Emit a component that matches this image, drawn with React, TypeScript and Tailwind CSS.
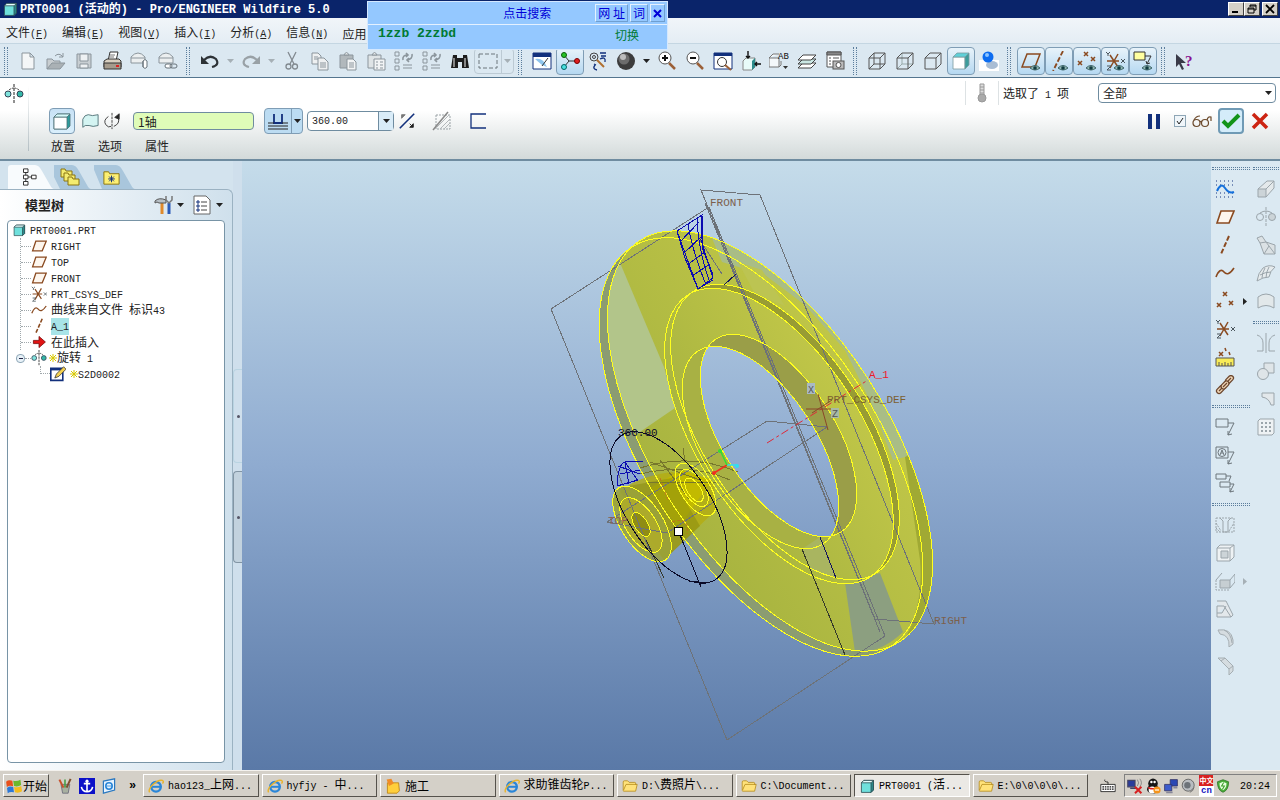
import { ReactNode, SVGProps } from "react";
import clsx from "clsx";

const G = "#8b959c";
const B = "#8a4a20";
const N = "#12307c";
const K = "#4a555c";

const Eye = () => (
  <g>
    <path d="M9 17q5-5 10 0q-5 4-10 0z" fill="#8fb5b0" stroke="#3d6468" />
    <circle cx="14" cy="17" r="1.8" fill="#123c40" />
  </g>
);

const Csys = () => (
  <g>
    <path d="M2 10h12M5 4l8 12M13 3L5 17" stroke={B} strokeWidth="1.5" />
    <path d="M1 1l2 2 2-2M3 3v2M16 8l4 4m0-4l-4 4M2 15h4l-4 4h4" stroke={K} />
  </g>
);

const Ie = () => (
  <g>
    <circle cx="10" cy="11" r="6" stroke="#2a86d8" strokeWidth="3" />
    <path d="M5 11h11" stroke="#2a86d8" strokeWidth="2.5" />
    <path d="M2 18C-1 13 12 1 18 3c2 1 1 3 0 4" stroke="#e8b32c" strokeWidth="1.8" />
  </g>
);

const Folder = () => (
  <path d="M1.500 16V5q0-1.500 1.500-1.500h4l2 2h7q1 0 1 1V8h2l-2 8.500H2z M2 15l3-7h13" fill="#ffe27a" stroke="#b58a1c" />
);

const icons: Record<string, ReactNode> = {
  part: (
    <g stroke="#2b4a50">
      <path d="M3 6l3-3h12v12l-3 3H3z" fill="#6fe0dc" />
      <path d="M15 6l3-3v12l-3 3z" fill="#2c8c8c" />
      <path d="M3 6l3-3h12l-3 3z" fill="#e6ffff" />
    </g>
  ),
  fresh: <path d="M4 2h8l4 4v12H4zM12 2v4h4" fill="#f4f6f7" stroke={G} />,
  open: (
    <g stroke={G}>
      <path d="M1 18V8h5l2 2h6v3" fill="#c8cdd0" />
      <path d="M1 18l5-6h13l-5 6z" fill="#aab1b5" />
      <path d="M9 5q4-4 8 1m0-4v4h-4" />
    </g>
  ),
  save: (
    <g stroke={G}>
      <path d="M3 3h14v14H3z" fill="#c8ced2" />
      <path d="M6 3h8v7H6zM6 13h8v4H6z" fill="#eef1f3" />
    </g>
  ),
  print: (
    <g stroke="#333">
      <path d="M6 10l2-9h8l-2 9z" fill="#fff" />
      <path d="M2 10l3-2h12l2 2v6H2z" fill="#d8cfc0" />
      <path d="M2 12h17v6H2z" fill="#a59b8c" />
      <path d="M8 4h5M7 6h5" stroke="#777" />
      <path d="M14 15h3" stroke="#d22" strokeWidth="2" />
    </g>
  ),
  mail: (
    <g stroke={G}>
      <path d="M1 12V6q7-8 14 0v6z" fill="#eceff0" />
      <path d="M1 7h14" />
      <path d="M13 10v6q2 3 4 0v-6q-2-3-4 0v6" fill="#fff" stroke="#68737a" />
    </g>
  ),
  mailLink: (
    <g stroke={G}>
      <path d="M1 12V6q7-8 14 0v6z" fill="#eceff0" />
      <path d="M1 7h14" />
      <rect x="7" y="13" width="7" height="4" rx="2" fill="#fff" stroke="#68737a" />
      <rect x="12" y="13" width="7" height="4" rx="2" stroke="#68737a" />
    </g>
  ),
  undo: (
    <g>
      <path d="M4 9q6-6 12-1q4 6-4 8" stroke="#2d3236" strokeWidth="2.200" />
      <path d="M1 5v8h8z" fill="#2d3236" />
    </g>
  ),
  redo: (
    <g>
      <path d="M16 9q-6-6-12-1q-4 6 4 8" stroke="#99a1a6" strokeWidth="2.200" />
      <path d="M19 5v8h-8z" fill="#99a1a6" />
    </g>
  ),
  cut: (
    <g stroke="#828a90" strokeWidth="1.300">
      <path d="M6 1l6 12M14 1L8 13" />
      <circle cx="6.500" cy="15.500" r="2.500" />
      <circle cx="13" cy="15.500" r="2.500" />
    </g>
  ),
  copy: (
    <g stroke={G}>
      <path d="M2 2h6l3 3v8H2z" fill="#eef0f1" />
      <path d="M8 7h6l4 4v8H8z" fill="#eef0f1" />
      <path d="M4 6h4M4 8h4M10 12h6M10 14h6M10 16h6" />
    </g>
  ),
  paste: (
    <g stroke={G}>
      <path d="M2 4h13v13H2z" fill="#b1b8bc" />
      <path d="M6 4q2.500-5 5 0z" fill="#e4e7e8" />
      <path d="M9 8h6l3 3v8H9z" fill="#f2f4f5" />
      <path d="M11 12h5M11 14h5M11 16h5" />
    </g>
  ),
  pasteSpecial: (
    <g stroke={G}>
      <path d="M2 4h13v13H2z" fill="#dfe4e6" />
      <path d="M6 4q2.500-5 5 0z" fill="#e4e7e8" />
      <path d="M8 8h11v11H8z" fill="#f2f4f5" />
      <path d="M10 11h2M14 11h3M10 14h2M14 14h3M10 17h2M14 17h3" />
    </g>
  ),
  regen: (
    <g stroke={G}>
      <path d="M1 1h4v4H1zM1 8h4v4H1zM1 15h4v4H1zM9 14h9M9 17h9" />
      <path d="M9 9q-1-5 5-5M18 3q1 5-5 6M12 2l2 2-2 2M15 7l-2 2 2 2" strokeWidth="1.600" />
    </g>
  ),
  find: (
    <g fill="#1c1c1c">
      <path d="M3 4h4v3h6V4h4l2 13h-7v-6H8v6H1z" />
      <path d="M4 7v9M15 7v9" stroke="#aaa" strokeWidth="1.500" />
    </g>
  ),
  box: <path d="M1 3h18v14H1z" stroke="#6d777d" strokeDasharray="4 2" />,
  repaint: (
    <g>
      <path d="M1 2h18v16H1z" fill="#fff" stroke={N} />
      <path d="M1 2h18v4H1z" fill={N} />
      <path d="M3 8q8-2 12 8l-5-2z" fill="#8fc4ec" />
      <path d="M16 7l-6 8" stroke="#333" />
    </g>
  ),
  spin: (
    <g>
      <path d="M4 4l5 6h8M9 10l-5 6" stroke="#333" />
      <circle cx="4" cy="4" r="2.500" fill="#27c427" stroke="#0a5c0a" />
      <circle cx="17" cy="10" r="2.500" fill="#e02020" stroke="#700" />
      <circle cx="4" cy="16" r="2.500" fill="#4ae0e0" stroke="#066" />
    </g>
  ),
  orient: (
    <g stroke={N}>
      <circle cx="6" cy="6" r="4" stroke="#444" />
      <circle cx="6" cy="6" r="1.500" stroke="#444" />
      <path d="M9 9l7 7" stroke="#b07030" strokeWidth="2" />
      <path d="M12 2h6M13 5h5M12 8q6-3 5 3M9 19q-5-1-2-5M6 13l2 1" strokeWidth="1.300" />
    </g>
  ),
  sphere: (
    <g>
      <circle cx="10" cy="10" r="9" fill="#3c3c3c" />
      <circle cx="8" cy="8" r="5.500" fill="#6c6c6c" />
      <circle cx="7" cy="6" r="3" fill="#bdbdbd" />
    </g>
  ),
  zoomIn: (
    <g>
      <circle cx="8" cy="7" r="6" fill="#fff" stroke="#555" />
      <path d="M5 7h6M8 4v6" stroke="#111" strokeWidth="2" />
      <path d="M12 12l6 6" stroke="#9b6038" strokeWidth="2.500" />
    </g>
  ),
  zoomOut: (
    <g>
      <circle cx="8" cy="7" r="6" fill="#fff" stroke="#555" />
      <path d="M5 7h6" stroke="#111" strokeWidth="2" />
      <path d="M12 12l6 6" stroke="#9b6038" strokeWidth="2.500" />
    </g>
  ),
  refit: (
    <g>
      <path d="M1 2h18v16H1z" fill="#fff" stroke={N} />
      <path d="M1 2h18v3H1z" fill={N} />
      <circle cx="9" cy="11" r="4.500" stroke="#333" />
      <path d="M12 14l6 5" stroke="#9b6038" strokeWidth="2" />
    </g>
  ),
  reorient: (
    <g>
      <path d="M2 10l3-3h9v9l-3 3H2z" fill="#e8fbf9" stroke="#888" />
      <path d="M11 10l3-3v9l-3 3z" fill="#2c8c8c" />
      <path d="M7 0v7M5 5l2 2 2-2M20 13h-6M16 11l-2 2 2 2" stroke="#111" strokeWidth="1.400" />
    </g>
  ),
  views: (
    <g>
      <path d="M0 7l4-4h6M0 7h10v9H0zM10 16l2-2v-4" fill="#f4f8fa" stroke="#777" />
      <text x="9" y="8" fontSize="9" fontFamily="Liberation Mono" fill="#111">AB</text>
      <path d="M14 15h5l-2.500 3z" fill="#333" />
    </g>
  ),
  layers: (
    <g fill="#fff" stroke="#444">
      <path d="M1 17l5-5h13l-5 5z" />
      <path d="M1 13l5-5h13l-5 5z" fill="#cbe8e4" />
      <path d="M1 9l5-5h13l-5 5z" />
    </g>
  ),
  viewMgr: (
    <g stroke="#555">
      <path d="M2 1h14v15H2z" fill="#fff" />
      <path d="M2 1h14v3H2z" fill="#888" />
      <path d="M4 7h2M8 7h6M4 10h2M4 13h2" />
      <rect x="8" y="10" width="11" height="8" fill="#bbb" />
      <circle cx="13.500" cy="14" r="2.500" fill="#fff" />
    </g>
  ),
  wire: <path d="M2 7h11v11H2zM7 2h11v11H7zM2 7l5-5M13 7l5-5M13 18l5-5M2 18l5-5" stroke="#555" />,
  hidden: (
    <g stroke="#555">
      <path d="M7 2v11h11M2 18l5-5" stroke="#9aa" />
      <path d="M2 7h11v11H2zM2 7l5-5h11l-5 5M18 2v11l-5 5" />
    </g>
  ),
  noHidden: <path d="M2 7h11v11H2zM2 7l5-5h11l-5 5M18 2v11l-5 5" stroke="#555" />,
  shaded: (
    <g stroke="#7a9aa0" strokeWidth="0.800">
      <path d="M2 6h12v12H2z" fill="#fff" />
      <path d="M2 6l4-4h12l-4 4z" fill="#5fd0d8" />
      <path d="M14 6l4-4v12l-4 4z" fill="#3c9c9c" />
    </g>
  ),
  enhanced: (
    <g>
      <path d="M0 9h20v11H0z" fill="#fff" />
      <ellipse cx="13" cy="14" rx="6" ry="4" fill="#a9bdd4" />
      <circle cx="9" cy="6" r="5.500" fill="#0c6cf0" />
      <circle cx="8" cy="4" r="2" fill="#8cc4ff" />
    </g>
  ),
  planeOn: (
    <g>
      <path d="M1 16L6 3h13l-5 13z" stroke={B} strokeWidth="1.500" />
      <Eye />
    </g>
  ),
  axisOn: (
    <g>
      <path d="M14 0L4 20" stroke={B} strokeWidth="1.800" strokeDasharray="5 2" />
      <Eye />
    </g>
  ),
  pointOn: (
    <g>
      <path d="M7 1l4 4m0-4L7 5M1 10l4 4m0-4l-4 4M14 6l4 4m0-4l-4 4" stroke={B} strokeWidth="1.500" />
      <Eye />
    </g>
  ),
  csysOn: (
    <g>
      <Csys />
      <Eye />
    </g>
  ),
  noteOn: (
    <g>
      <path d="M1 1h11v8H1z" fill="#ffffa0" stroke="#333" />
      <path d="M12 5h6l-4 8M13 10l1 3 3-1" stroke="#333" />
      <Eye />
    </g>
  ),
  help: (
    <g>
      <path d="M1 3v13l3-3 3 6 2-1-3-6h5z" fill="#3a3a48" />
      <text x="10" y="15" fontSize="15" fontWeight="bold" fontFamily="Liberation Serif" fill="#8a1090">?</text>
    </g>
  ),
  revolve: (
    <g>
      <path d="M10 0v20" stroke="#222" strokeDasharray="3 1" />
      <circle cx="4" cy="10" r="3" fill="#7fe3dc" stroke="#345" />
      <circle cx="16" cy="10" r="3" fill="#33b8a8" stroke="#345" />
      <path d="M5 6q5-4 10 0" stroke="#333" strokeDasharray="2 1" />
    </g>
  ),
  surface: <path d="M2 17V8q2-5 6-5q4 2 11 0v12q-6 2-10 0q-5-1-7 2z" fill="#d4f4f2" stroke="#4d6f74" />,
  angle: (
    <g stroke="#333">
      <path d="M10 1v18" strokeDasharray="3 1" />
      <path d="M6 5q-6 4-3 9q3 4 6 2M12 16q7-3 5-9" />
      <path d="M13 6l5-4v6z" fill="#222" />
    </g>
  ),
  depth: (
    <g stroke="#222">
      <path d="M6 3v9h8V3" stroke={N} strokeWidth="1.800" />
      <path d="M0 12h6M14 12h6M0 15h20M0 18h20" />
    </g>
  ),
  flip: (
    <g>
      <path d="M2 18L18 2" stroke={N} strokeWidth="1.800" />
      <path d="M4 3h4L4 7z" fill="#777" stroke="#777" />
      <path d="M17 17h-4l4-4zM13 13l3 3" fill="#222" stroke="#222" />
    </g>
  ),
  removeMat: (
    <g stroke="#9aa2a6">
      <path d="M4 4h14v14H4z" strokeDasharray="2 1" />
      <path d="M8 18L18 8M12 18l6-6M5 16L17 4" stroke="#b3b8ba" />
      <path d="M1 19L16 1" stroke="#888" strokeWidth="1.500" />
    </g>
  ),
  thicken: <path d="M18 3H3v14h15" stroke={N} strokeWidth="1.300" />,
  thermo: (
    <g stroke="#999" fill="#ddd">
      <path d="M8 1h4v12H8z" />
      <circle cx="10" cy="15" r="4" fill="#aaa" />
      <path d="M8 4h4M8 7h4M8 10h4" />
    </g>
  ),
  glasses: (
    <g stroke="#6c4a2c" strokeWidth="1.200">
      <circle cx="4.500" cy="12" r="3.500" />
      <circle cx="13" cy="12" r="3.500" />
      <path d="M8 11q1-1 2 0M2 9q2-4 6-4M15 9q1-4 4-3v4" />
    </g>
  ),
  check: <path d="M2 10l5 5L18 4" stroke="#12941a" strokeWidth="4" />,
  cross: <path d="M3 3l14 14M17 3L3 17" stroke="#cc2412" strokeWidth="3.500" />,
  tree: <path d="M5 1h5v4H5zM5 8h5v4H5zM5 15h5v4H5zM14 8h5v4h-5zM7.500 5v3M7.500 12v3M10 10h4" fill="#fff" stroke="#222" />,
  folders: (
    <g fill="#f4ec70" stroke="#8a7410">
      <path d="M1 10V2h4l1 2h6v6z" />
      <path d="M4 14V6h4l1 2h6v6z" />
      <path d="M8 18v-8h4l1 2h6v6z" />
    </g>
  ),
  favorites: (
    <g>
      <path d="M2 17V4h5l1 2h10v11z" fill="#fdf074" stroke="#8a7410" />
      <path d="M10 8v7M6.500 11.500h7M7.500 9l5 5M12.500 9l-5 5" stroke={N} />
    </g>
  ),
  tools: (
    <g>
      <path d="M9 8v11" stroke="#e08a2c" strokeWidth="3" />
      <path d="M2 6q4-4 11-1v3H6q-2-2-4 0z" fill="#b8c0c6" stroke="#555" />
      <path d="M16 8v11" stroke="#2a5ab8" strokeWidth="3" />
      <path d="M13 1v4l3 3 3-3V1" stroke="#777" strokeWidth="1.500" />
    </g>
  ),
  settings: (
    <g stroke="#666">
      <path d="M2 1h12l4 4v14H2z" fill="#fff" />
      <path d="M9 7h6M9 11h6M9 15h6" stroke="#444" />
      <path d="M5 6h2v2H5zM5 10h2v2H5zM5 14h2v2H5z" stroke={N} />
    </g>
  ),
  plane: <path d="M2 16L6 4h13l-5 12z" fill="#fdf6ee" stroke={B} strokeWidth="1.600" />,
  csys: <Csys />,
  curve: <path d="M1 14q4-10 8-5t10-4" stroke={B} strokeWidth="1.600" />,
  axis: <path d="M14 1L6 19" stroke={B} strokeWidth="2" strokeDasharray="5 2" />,
  insert: <path d="M3 8h7V3l8 7-8 7v-5H3z" fill="#e01414" stroke="#7a0808" />,
  sketch: (
    <g>
      <path d="M1 3h15v15H1z" fill="#fff" stroke={N} strokeWidth="2" />
      <path d="M1 4h15" stroke={N} strokeWidth="3" />
      <path d="M6 15l2-5 9-9 3 3-9 9z" fill="#f4d050" stroke="#333" />
    </g>
  ),
  sketchTool: (
    <g>
      <path d="M1 2h18M1 6h18M1 14h18M1 18h18" stroke={N} strokeDasharray="1 3" />
      <path d="M2 12q4-9 8-3t9 4" stroke="#1470dc" strokeWidth="2" />
    </g>
  ),
  points: <path d="M8 1l4 4m0-4L8 5M2 12l4 4m0-4l-4 4M14 10l4 4m0-4l-4 4" stroke={B} strokeWidth="1.600" />,
  measure: (
    <g>
      <path d="M4 5l4 4m0-4L4 9M10 1l1 3M14 5l1 3" stroke={B} strokeWidth="1.500" />
      <path d="M1 11h18v8H1z" fill="#f8ec58" stroke="#555" />
      <path d="M4 19v-4M7 19v-3M10 19v-4M13 19v-3M16 19v-4" stroke="#555" />
    </g>
  ),
  chain: (
    <g stroke="#6c4830" fill="#f2d8b8" strokeWidth="1.300">
      <rect x="12" y="0" width="5" height="9" rx="2.500" transform="rotate(45 14.500 4.500)" />
      <rect x="3" y="10" width="5" height="9" rx="2.500" transform="rotate(45 5.500 14.500)" />
      <rect x="7.500" y="5.500" width="5" height="9" rx="2.500" transform="rotate(45 10 10)" />
      <path d="M8 12l4-4M13 6l3-3M4 16l3-3" />
    </g>
  ),
  note: <path d="M1 2h12v8H1zM13 6h6l-6 12M13 14v4l4-1" stroke="#6d767c" />,
  noteA: (
    <g stroke="#6d767c">
      <path d="M1 2h12v11H1zM13 7h6l-6 12M13 15v4l4-1" />
      <circle cx="7" cy="7.500" r="4" />
      <path d="M5 10l2-5 2 5M6 8h2" />
    </g>
  ),
  notes: <path d="M1 1h10v5H1zM11 3h5l-2 5M5 9h10v5H5zM15 11h4l-4 8M15 15v4l4-1" stroke="#6d767c" />,
  extrude: (
    <g stroke="#9ba5ab">
      <path d="M2 10l9-8h7v7l-8 9z" fill="#e4e9eb" />
      <path d="M2 10h8v8H2z" fill="#ccd4d8" />
      <path d="M10 10l8-8" />
    </g>
  ),
  revolveOff: (
    <g stroke="#9ba5ab">
      <path d="M10 0v20" strokeDasharray="3 1" />
      <circle cx="4" cy="10" r="3.500" />
      <circle cx="16" cy="10" r="3.500" fill="#ccd4d8" />
      <path d="M4 6q6-4 12 0" />
    </g>
  ),
  sweep: (
    <g stroke="#9ba5ab" fill="#dbe1e4">
      <path d="M1 3l5-2 4 6 9 3v9H8L4 8z" />
      <path d="M4 8l6-1M10 7l9 12M8 19l5-8" />
    </g>
  ),
  boundary: <path d="M1 18q1-8 6-13q6-4 12-1q-5 4-6 10q-6 0-12 4zM4 12q5-3 11-3M9 5q-3 5-3 10M13 4q-3 5-3 11" fill="#e6ebed" stroke="#9ba5ab" />,
  fill: <path d="M2 17V6q8-6 16 0v11q-8-5-16 0z" fill="#e2e8ea" stroke="#9ba5ab" />,
  mirror: <path d="M10 0v20M1 2q6 2 6 8v8H1M19 2q-6 2-6 8v8h6" stroke="#9ba5ab" />,
  merge: (
    <g stroke="#9ba5ab" fill="#dfe5e8">
      <path d="M8 2h10v10H8z" />
      <circle cx="7" cy="13" r="5.500" />
    </g>
  ),
  trim: <path d="M6 4h12v12h-3Q13 9 6 8z" stroke="#9ba5ab" fill="#e3e8eb" />,
  pattern: (
    <g stroke="#9ba5ab">
      <path d="M2 4l2-2h14v14l-2 2H2z" fill="#eef2f4" />
      <path d="M5 6h11M5 10h11M5 14h11" strokeDasharray="2 2" strokeWidth="2" />
    </g>
  ),
  hole: (
    <g stroke="#9ba5ab">
      <path d="M5 3l3 3v11h5V6l3-3" />
      <path d="M1 3h18v14H1zM1 8l5 8M14 16l5-8M1 13l4 4" strokeDasharray="2 1" />
    </g>
  ),
  shell: (
    <g stroke="#9ba5ab">
      <path d="M2 5l3-3h14v12l-4 4H2z" fill="#eef2f4" />
      <path d="M6 8h7v7H6z" fill="#ccd4d8" />
      <path d="M2 5h13v13M15 5l4-3" />
    </g>
  ),
  rib: (
    <g stroke="#9ba5ab">
      <path d="M5 9h10v8H5z" fill="#c6ced2" />
      <path d="M1 9l6-7M15 9l5-6v8l-5 6" />
      <path d="M1 9v10h14" strokeDasharray="2 1" />
    </g>
  ),
  draft: <path d="M2 2h9l7 14-2 2H2V7h7l7 11M2 14h5l4-7" fill="#e3e8eb" stroke="#9ba5ab" />,
  round: <path d="M3 3q13-2 15 10v4l-4 3q1-12-9-13zM9 3q7 3 8 13" fill="#d5dce0" stroke="#a5aeb3" />,
  chamfer: <path d="M3 3h7l8 8v5l-4 4v-6L6 6zM10 3l-4 3M18 11l-4 3" fill="#d5dce0" stroke="#a5aeb3" />,
  ie: <Ie />,
  folder: <Folder />,
  note2: (
    <g>
      <path d="M3 6h14l1 10-3 3H3z" fill="#ffcf3c" stroke="#b97f10" />
      <path d="M2 2l6-1 3 6-6 3z" fill="#f08c28" />
    </g>
  ),
  win: (
    <g transform="rotate(-8 10 10)">
      <path d="M2 4q3-2 7 0v6q-4-2-7 0z" fill="#e8501c" />
      <path d="M10 4q4 2 8 0v6q-4 2-8 0z" fill="#6ab82c" />
      <path d="M2 11q3-2 7 0v6q-4-2-7 0z" fill="#2c78d8" />
      <path d="M10 11q4 2 8 0v6q-4 2-8 0z" fill="#f4bc1c" />
    </g>
  ),
  brushes: (
    <g>
      <path d="M5 8l2 11h7l2-11z" fill="#a8b0a0" stroke="#667" />
      <path d="M3 2l5 10" stroke="#c8502c" strokeWidth="2.500" />
      <path d="M10 2v10" stroke="#48a048" strokeWidth="2" />
      <path d="M17 1l-5 11" stroke="#805030" strokeWidth="2.500" />
    </g>
  ),
  anchor: (
    <g>
      <path d="M0 0h20v20H0z" fill="#0c10c8" />
      <path d="M10 3v13M6 7h8M3 11q1 6 7 6t7-6" stroke="#fff" strokeWidth="2" />
      <circle cx="10" cy="4" r="2" fill="#fff" />
    </g>
  ),
  page: (
    <g>
      <path d="M3 4l14-3v14l-14 4z" fill="#e6f3ff" stroke="#2a78c0" strokeWidth="1.500" />
      <circle cx="10" cy="10" r="4" stroke="#2a86d8" strokeWidth="2" />
      <path d="M7 10h7" stroke="#2a86d8" />
    </g>
  ),
  keyboard: (
    <g stroke="#111">
      <path d="M1 8h18v9H1z" fill="#fff" />
      <path d="M3 11h14M3 14h14" strokeDasharray="2 1" strokeWidth="1.500" />
      <path d="M10 8V5q-5 0-4-3" />
    </g>
  ),
  netOff: (
    <g>
      <path d="M1 3h9v8H1zM4 13h9" fill="#2a3c9c" stroke="#446" strokeWidth="1.500" />
      <path d="M13 2q3 4 0 8M16 1q4 5 0 10" stroke="#777" />
      <path d="M10 11l8 8M18 11l-8 8" stroke="#d82020" strokeWidth="2.500" />
    </g>
  ),
  qq: (
    <g>
      <ellipse cx="10" cy="7" rx="6" ry="6.500" fill="#161616" />
      <ellipse cx="10" cy="14" rx="7.500" ry="5.500" fill="#161616" />
      <ellipse cx="9" cy="15" rx="4.500" ry="4.500" fill="#fff" />
      <path d="M4 11q6 3 12 0v2q-6 3-12 0z" fill="#e02020" />
      <circle cx="8" cy="5" r="1.500" fill="#fff" />
      <circle cx="12" cy="5" r="1.500" fill="#fff" />
      <circle cx="15" cy="15" r="4.500" fill="#f4941c" />
      <path d="M12.500 15h5" stroke="#fff" strokeWidth="1.500" />
    </g>
  ),
  net: (
    <g stroke="#336">
      <path d="M9 2h9v8H9z" fill="#2b48b4" />
      <path d="M2 8h9v8H2z" fill="#3c5ccc" />
      <path d="M4 18h8M13 12h5" stroke="#889" strokeWidth="2" />
    </g>
  ),
  volume: (
    <g>
      <circle cx="9" cy="9" r="7.500" fill="#b8bcc0" stroke="#555" />
      <circle cx="8" cy="9" r="4" fill="#6c7278" />
      <path d="M16 12q0 4-5 6" stroke="#666" />
    </g>
  ),
  shield: (
    <g>
      <path d="M10 1l8 3q0 12-8 15Q2 16 2 4z" fill="#48ac38" stroke="#246c1c" />
      <path d="M10 4l5 2q0 7-5 10-5-3-5-10z" fill="#e8ffe0" />
      <path d="M11 5l-3 5h4l-3 5" stroke="#3c9c2c" strokeWidth="1.500" />
    </g>
  ),
};

function Icon({ name, className = "size-5" }: { name: string; className?: string }) {
  return (
    <svg viewBox="0 0 20 20" fill="none" className={clsx("shrink-0", className)} aria-hidden="true">
      {icons[name]}
    </svg>
  );
}

// Latin runs are set in the monospaced face, the rest keeps the CJK face
function Txt({ children, size = "text-[10px]" }: { children: string; size?: string }) {
  return (
    <>
      {children.split(/([\x20-\x7e]+)/).map((part, i) =>
        i % 2 ? (
          <span key={i} className={clsx("whitespace-pre font-['Liberation_Mono',monospace]", size)}>{part}</span>
        ) : (
          part
        )
      )}
    </>
  );
}

function Caret({ color = "#222" }: { color?: string }) {
  return (
    <svg viewBox="0 0 7 4" className="h-1 w-[7px] shrink-0" aria-hidden="true">
      <path d="M0 0h7L3.500 4z" fill={color} />
    </svg>
  );
}

function Grip() {
  return (
    <div className="flex w-3.5 shrink-0 items-center pl-1">
      <div className="h-7 w-1 border-x border-dotted border-[#5b7d9c]" />
    </div>
  );
}

function Tool({ name, active }: { name: string; active?: boolean }) {
  return (
    <button
      aria-label={name}
      className={clsx(
        "flex h-7 w-7 shrink-0 items-center justify-center",
        active && "rounded-sm border border-[#7f9db5] bg-gradient-to-b from-[#e8f3fa] to-[#b5d8f1]"
      )}
    >
      <Icon name={name} />
    </button>
  );
}

function Drop({ color }: { color?: string }) {
  return (
    <button aria-label="more" className="flex h-7 w-[13px] shrink-0 items-center justify-center">
      <Caret color={color} />
    </button>
  );
}

const menus = [
  ["文件", "F"],
  ["编辑", "E"],
  ["视图", "V"],
  ["插入", "I"],
  ["分析", "A"],
  ["信息", "N"],
];

function TitleBar() {
  const btn =
    "flex h-3.5 w-4 items-center justify-center border border-t-white border-l-white border-r-[#404040] border-b-[#404040] bg-[#d4d0c8]";
  return (
    <header className="flex h-[18px] shrink-0 items-center bg-[#0a246a] px-0.5 text-white">
      <Icon name="part" className="size-4" />
      <h1 className="ml-0.5 whitespace-pre text-[12px] font-bold leading-4">
        <Txt size="text-[12px]">PRT0001 (活动的) - Pro/ENGINEER Wildfire 5.0</Txt>
      </h1>
      <div className="ml-auto flex">
        <button aria-label="minimize" className={btn}>
          <svg viewBox="0 0 10 10" className="size-2.5"><path d="M1 8h6" stroke="#000" strokeWidth="2" /></svg>
        </button>
        <button aria-label="restore" className={btn}>
          <svg viewBox="0 0 10 10" className="size-2.5" fill="none" stroke="#000">
            <path d="M3 1h6v5H7M3 1v2M3 2h6M1 4h6v5H1zM1 5h6" />
          </svg>
        </button>
        <button aria-label="close" className={clsx(btn, "ml-0.5")}>
          <svg viewBox="0 0 10 10" className="size-2.5"><path d="M1 1l8 8M9 1L1 9" stroke="#000" strokeWidth="1.800" /></svg>
        </button>
      </div>
    </header>
  );
}

function ImePanel() {
  const btn = "border border-[#e4f1ff] border-r-[#6f9fd0] border-b-[#6f9fd0] px-0.5 leading-4";
  return (
    <div className="absolute left-[367px] top-px w-[301px] border border-[#d4e8ff] bg-[#94c8ff] pb-1 text-[12px]">
      <div className="flex items-center justify-end border-b border-[#e4f1ff] py-0.5 pr-0.5 text-[#0000d8]">
        <span className="mr-11">点击搜索</span>
        <button className={btn}>网 址</button>
        <button className={clsx(btn, "ml-0.5")}>词</button>
        <button aria-label="close" className={clsx(btn, "ml-0.5 flex h-[18px] items-center")}>
          <svg viewBox="0 0 9 9" className="size-[9px]"><path d="M1 1l7 7M8 1L1 8" stroke="#0000d8" strokeWidth="2" /></svg>
        </button>
      </div>
      <div className="flex justify-between pl-2.5 pr-7 leading-5 text-[#007a34]">
        <span className="font-['Liberation_Mono',monospace] text-[13px] font-bold leading-[18px]">1zzb 2zzbd</span>
        <span>切换</span>
      </div>
    </div>
  );
}

function Toolbar() {
  return (
    <div className="flex h-[34px] shrink-0 items-center border-b border-[#54758e] bg-[#dbe8f1]">
      <Grip />
      {["fresh", "open", "save", "print", "mail", "mailLink"].map((n) => <Tool key={n} name={n} />)}
      <Grip />
      <Tool name="undo" />
      <Drop color="#a6b0b6" />
      <Tool name="redo" />
      <Drop color="#a6b0b6" />
      {["cut", "copy", "paste", "pasteSpecial"].map((n) => <Tool key={n} name={n} />)}
      <Tool name="regen" />
      <Tool name="regen" />
      <Tool name="find" />
      <div className="flex w-10 shrink-0 rounded-sm border border-[#bccad4]">
        <button aria-label="select box" className="flex h-6 w-[27px] items-center justify-center border-r border-[#bccad4]">
          <Icon name="box" />
        </button>
        <button aria-label="more" className="flex flex-1 items-center justify-center"><Caret color="#a6b0b6" /></button>
      </div>
      <Grip />
      <Tool name="repaint" />
      <Tool name="spin" active />
      <Tool name="orient" />
      <Tool name="sphere" />
      <Drop />
      {["zoomIn", "zoomOut", "refit", "reorient", "views", "layers", "viewMgr"].map((n) => <Tool key={n} name={n} />)}
      <Grip />
      {["wire", "hidden", "noHidden"].map((n) => <Tool key={n} name={n} />)}
      <Tool name="shaded" active />
      <Tool name="enhanced" />
      <Grip />
      {["planeOn", "axisOn", "pointOn", "csysOn", "noteOn"].map((n) => <Tool key={n} name={n} active />)}
      <Grip />
      <Tool name="help" />
    </div>
  );
}

function Dashboard() {
  return (
    <section className="flex h-[83px] shrink-0 border-b-2 border-[#6f8ca0] bg-gradient-to-b from-white from-40% to-[#d3dada] text-[12px]">
      <div className="my-1.5 w-7 shrink-0 pl-1">
        <Icon name="revolve" />
      </div>
      <div className="my-2 w-px bg-gradient-to-b from-white to-[#b4bfc4]" />
      <div className="flex flex-1 flex-col">
        <div className="flex h-[30px] items-center justify-end pr-1">
          <div className="mr-1.5 h-6 w-px bg-[#dde2e4]" />
          <Icon name="thermo" />
          <div className="ml-1.5 h-6 w-px bg-[#dde2e4]" />
          <span className="ml-1 w-[95px]"><Txt>选取了 1 项</Txt></span>
          <div className="relative w-[178px]">
            <select aria-label="filter" className="h-5 w-full appearance-none rounded-sm border border-[#6f8ca0] bg-white px-1 text-[12px] leading-4">
              <option>全部</option>
            </select>
            <div className="pointer-events-none absolute right-1 top-2"><Caret /></div>
          </div>
        </div>
        <div className="flex h-[26px] items-center pl-5 pr-2.5">
          <button aria-label="solid" className="flex size-[26px] items-center justify-center rounded-sm border border-[#7f9db5] bg-gradient-to-b from-[#c8e2f5] to-[#d9effc]">
            <svg viewBox="0 0 20 20" className="size-5" fill="none" stroke="#4d6f74" strokeWidth="0.800">
              <path d="M2 6l3-3h13v12l-3 3H2z" fill="#2c9c9c" />
              <path d="M2 6h13v12H2z" fill="#fff" />
              <path d="M2 6l3-3h13l-3 3z" fill="#d8fafa" />
            </svg>
          </button>
          <button aria-label="surface" className="ml-1.5"><Icon name="surface" className="size-[18px]" /></button>
          <button aria-label="angle" className="ml-1"><Icon name="angle" className="size-[18px]" /></button>
          <input aria-label="axis" defaultValue="1轴" className="ml-3 h-[18px] w-[121px] rounded border border-[#6f8ca0] bg-[#dffcb8] px-1 text-[12px] leading-4" />
          <div className="ml-2.5 flex h-[26px] w-[39px] rounded-sm border border-[#7f9db5] bg-[#bcdcf2]">
            <button aria-label="depth" className="flex w-[27px] items-center justify-center border-r border-[#7f9db5]"><Icon name="depth" /></button>
            <button aria-label="more" className="flex flex-1 items-center justify-center"><Caret /></button>
          </div>
          <div className="ml-1 flex h-5 w-[87px] rounded-sm border border-[#6f8ca0] bg-white">
            <input aria-label="value" defaultValue="360.00" className="w-0 flex-1 px-1 pt-px font-['Liberation_Mono',monospace] text-[10px] leading-4" />
            <button aria-label="more" className="flex w-[15px] items-center justify-center border-l border-[#6f8ca0] bg-[#d9ecf8]"><Caret /></button>
          </div>
          <button aria-label="flip" className="ml-1"><Icon name="flip" className="size-[18px]" /></button>
          <button aria-label="remove material" className="ml-4"><Icon name="removeMat" /></button>
          <button aria-label="thicken" className="ml-4"><Icon name="thicken" /></button>
          <button aria-label="pause" className="ml-auto flex h-[15px] w-3 justify-between">
            <span className="w-1 bg-[#12307c]" />
            <span className="w-1 bg-[#12307c]" />
          </button>
          <label className="relative ml-3.5 flex">
            <input type="checkbox" aria-label="preview" defaultChecked className="size-3 appearance-none border border-[#8ea6b6] bg-[#f0f6fa]" />
            <svg viewBox="0 0 12 12" className="pointer-events-none absolute inset-0" fill="none" stroke="#222"><path d="M3 6l2 3 4-6" /></svg>
          </label>
          <button aria-label="glasses" className="ml-1.5"><Icon name="glasses" /></button>
          <button aria-label="accept" className="ml-1.5 flex size-[26px] items-center justify-center rounded-sm border-2 border-[#6f9ab5] bg-[#d4ecfa]"><Icon name="check" /></button>
          <button aria-label="cancel" className="ml-1.5"><Icon name="cross" /></button>
        </div>
        <div className="flex h-6 items-center gap-[23px] pl-[22px] leading-4">
          <button>放置</button>
          <button>选项</button>
          <button>属性</button>
        </div>
      </div>
    </section>
  );
}

const treeItems = [
  { icon: "plane", label: "RIGHT" },
  { icon: "plane", label: "TOP" },
  { icon: "plane", label: "FRONT" },
  { icon: "csys", label: "PRT_CSYS_DEF" },
  { icon: "curve", label: "曲线来自文件 标识43" },
  { icon: "axis", label: "A_1", selected: true },
  { icon: "insert", label: "在此插入" },
];

function Star() {
  return (
    <svg viewBox="0 0 8 8" className="size-2 shrink-0" stroke="#d8c800" aria-hidden="true">
      <path d="M4 0v8M0 4h8M1 1l6 6M7 1L1 7" />
    </svg>
  );
}

function ModelTree() {
  return (
    <aside className="flex w-[233px] shrink-0 flex-col bg-[#d3e3ee] text-[12px]">
      <div className="flex h-7 items-end pt-1">
        <button aria-label="model tree" className="ml-2 h-full">
          <svg viewBox="0 0 46 24" className="h-6 w-[46px]">
            <path d="M0 24V3q0-3 3-3h24q4 0 7 6l8 14q2 4 4 4z" fill="#f8fbfd" />
            <svg x="11" y="3" width="18" height="18" viewBox="0 0 20 20">{icons.tree}</svg>
          </svg>
        </button>
        <button aria-label="folders" className="h-full">
          <svg viewBox="0 0 40 24" className="h-6 w-10">
            <path d="M-6 0h24q4 0 7 6l8 14q2 4 4 4H6z" fill="#a9c6dc" />
            <svg x="6" y="2" width="20" height="20" viewBox="0 0 20 20">{icons.folders}</svg>
          </svg>
        </button>
        <button aria-label="favorites" className="h-full">
          <svg viewBox="0 0 46 24" className="h-6 w-[46px]">
            <path d="M-2 0h24q4 0 7 6l8 14q2 4 4 4H8z" fill="#a9c6dc" />
            <svg x="8" y="3" width="19" height="19" viewBox="0 0 20 20">{icons.favorites}</svg>
          </svg>
        </button>
      </div>
      <div className="flex flex-1 flex-col rounded-tr-md border-t border-r border-[#9bb2c2] bg-gradient-to-r from-white to-[#cfe0ec] px-[7px] pb-[7px]">
        <div className="flex h-[30px] items-center pl-[18px]">
          <h2 className="text-[13px] font-bold leading-4 text-[#222]">模型树</h2>
          <button className="ml-auto flex items-center gap-1" aria-label="tools"><Icon name="tools" /><Caret /></button>
          <button className="mr-0.5 ml-1 flex items-center gap-1" aria-label="settings"><Icon name="settings" className="ml-1 size-5" /><Caret /></button>
        </div>
        <div className="flex-1 rounded border border-[#7894a6] bg-white pt-px pl-1 leading-4 text-[#222]">
          <div className="flex h-4 items-center gap-1">
            <Icon name="part" className="size-3.5" />
            <span><Txt>PRT0001.PRT</Txt></span>
          </div>
          <ul className="ml-2 border-l border-dotted border-[#a0a8ac]">
            {treeItems.map((t) => (
              <li key={t.label} className="flex h-4 items-center">
                <span className="w-2.5 border-t border-dotted border-[#a0a8ac]" />
                <Icon name={t.icon} className="size-4" />
                <span className={clsx("ml-1 whitespace-pre leading-[14px]", t.selected && "bg-[#a8e4e8]")}><Txt>{t.label}</Txt></span>
              </li>
            ))}
          </ul>
          <div className="flex h-4 items-center pl-1">
            <button aria-label="collapse" className="flex size-[9px] items-center justify-center rounded-sm border border-[#8ea6b6] bg-[#e8f2f8]">
              <span className="h-px w-1 bg-[#224]" />
            </button>
            <span className="w-1.5 border-t border-dotted border-[#a0a8ac]" />
            <Icon name="revolve" className="size-4" />
            <span className="ml-0.5 flex items-center whitespace-pre"><Star /><span><Txt>旋转 1</Txt></span></span>
          </div>
          <div className="ml-7 flex h-4 items-center">
            <span className="h-2 w-2.5 self-start border-b border-l border-dotted border-[#a0a8ac]" />
            <Icon name="sketch" className="size-4" />
            <span className="ml-1 flex items-center"><Star /><span><Txt>S2D0002</Txt></span></span>
          </div>
        </div>
      </div>
    </aside>
  );
}

function Splitter() {
  return (
    <div className="flex w-[9px] shrink-0 flex-col bg-[#cfdfec] pt-[208px]">
      <div className="flex h-[94px] items-center justify-center rounded-l border border-r-0 border-[#b9d4e2]">
        <span className="size-[3px] rounded-full bg-[#556]" />
      </div>
      <div className="mt-2 flex h-[92px] items-center justify-center rounded-l border border-r-0 border-[#8295a4] bg-[#c2d2de]">
        <span className="size-[3px] rounded-full bg-[#556]" />
      </div>
    </div>
  );
}

// A circle around the model axis, seen in the current orientation
function Ring({ x, y, r, ...rest }: { x: number; y: number; r: number } & SVGProps<SVGEllipseElement>) {
  return <ellipse cx={x} cy={y} rx={r} ry={r * 0.486} transform={`rotate(57 ${x} ${y})`} {...rest} />;
}

function Viewport() {
  return (
    <main className="min-w-0 flex-1 bg-gradient-to-b from-[#c5dcea] via-[#8fabd0] to-[#5a79a7]">
      <svg viewBox="242 161 969 609" className="block h-full w-full" fill="none" fontFamily="Liberation Mono" fontSize="11">
        <defs>
          <linearGradient id="face" x1="0" y1="0" x2="0" y2="1">
            <stop offset="0" stopColor="#c0c648" />
            <stop offset="1" stopColor="#a8b440" />
          </linearGradient>
          <clipPath id="h1"><Ring x={760.5} y={447.5} r={115} /></clipPath>
          <clipPath id="outer"><Ring x={770} y={441} r={239} /></clipPath>
          <mask id="disc" maskUnits="userSpaceOnUse" x="560" y="200" width="420" height="480">
            <rect x="560" y="200" width="420" height="480" fill="#fff" />
            <g clipPath="url(#h1)"><Ring x={778.5} y={435.5} r={115} fill="#000" /></g>
          </mask>
        </defs>

        <g mask="url(#disc)">
          <Ring x={761} y={447} r={238} fill="#8b9c72" />
          <Ring x={770} y={441} r={239} fill="url(#face)" />
          <g clipPath="url(#outer)">
            <path d="M618 258L664 367L675 408L634 436L590 340z" fill="#b2c58a" />
            <path d="M700 210H800L880 330L940 440L905 457L893 460L872 405L845 350L805 305L765 275L722 262z" fill="#a9bd86" />
            <path d="M738 262L762 270L785 306L755 294z" fill="#bcc452" />
            <path d="M905 457L940 440V640L890 660Q925 620 920 560z" fill="#a0a934" />
            <path d="M845 583L880 573L903 632Q880 654 855 652z" fill="#8c9f80" />
          </g>
          <Ring x={785} y={432} r={168} fill="#989c34" />
          <Ring x={779} y={436} r={168} fill="url(#face)" />
          <Ring x={778.5} y={435.5} r={115} fill="#9a9e48" />
          <Ring x={760.5} y={447.5} r={115} fill="#a8b144" />
          <path d="M802 549L820 537L836 578L810 570z" fill="#a9b560" />
        </g>

        <g>
          <path d="M612 502Q625 478 672 472L714 484L716 510L664 560z" fill="#b4ac10" fillOpacity=".8" />
          <path d="M650 488L682 470L712 480L678 528z" fill="#c2ba00" />
          <path d="M618 488L664 560L700 526L672 478z" fill="#8a8c10" fillOpacity=".55" />
          <Ring x={642} y={524} r={43} fill="#9aa23c" fillOpacity=".85" />
          <Ring x={641} y={525} r={31} fill="#b0ad28" fillOpacity=".8" />
          <Ring x={641} y={524.5} r={13.5} fill="#8f8c14" />
        </g>

        <g stroke="#6d7278" shapeRendering="crispEdges">
          <path d="M701 190L760 195L934 624L875 619z" />
          <path d="M709 207L551 309L727 740L885 636z" />
          <path d="M767 421L827 427L667 533L607 522z" />
          <path d="M705 203L880 632M700 240L722 274" />
          <path d="M640 468Q690 452 738 472M640 474Q690 462 730 480M650 462L700 480M660 460L690 500M648 482L716 482M683 448L685 462" stroke="#77772c" />
        </g>

        <g stroke="#ffff1e" shapeRendering="crispEdges">
          <Ring x={761} y={447} r={238} />
          <Ring x={770} y={441} r={239} />
          <Ring x={779} y={436} r={168} />
          <Ring x={785} y={432} r={168} />
          <Ring x={760.5} y={447.5} r={115} />
          <Ring x={778.5} y={435.5} r={115} />
          <Ring x={642} y={524} r={43} />
          <Ring x={641} y={525} r={31} />
          <Ring x={641} y={524.5} r={13.5} />
          <Ring x={695.5} y={489.5} r={30} />
          <Ring x={694} y={488} r={21} />
          <Ring x={694} y={490} r={13.5} />
        </g>

        <g stroke="#0c0cb0" shapeRendering="crispEdges">
          <path d="M677 231L702 215L701 240L713 278L698 289zM677 231L685 258L698 289L713 280" />
          <path d="M680 242L699 222M683 254L702 236M687 265L705 252M692 276L710 264M688 224Q692 250 706 285M697 218Q698 250 710 283M702 215L703 250L713 275" />
          <path d="M617 486Q618 464 625 462L643 461M617 486L638 480M625 462L638 481M620 474L640 470M625 462L629 484M618 466L640 474" />
          <path d="M820 537L836 578M724 285L736 274" stroke="#14145c" />
        </g>
        <path d="M802 549L845 655M646 540L664 578" stroke="#34382c" shapeRendering="crispEdges" />

        <g stroke="#0a0a28" shapeRendering="crispEdges">
          <Ring x={668.5} y={507.5} r={86} />
          <path d="M680 535L701 587M689 581L708 583" />
        </g>
        <rect x="674.5" y="527.5" width="8" height="8" fill="#fff" stroke="#000" />

        <path d="M767 443L868 380" stroke="#e02838" strokeDasharray="8 3 3 3" />
        <path d="M806 409H835M818 394L828 430M812 413L832 400" stroke="#8a4628" />
        <path d="M714 473L727 465" stroke="#f03020" strokeWidth="1.500" />
        <path d="M727 465H737" stroke="#30e0f0" strokeWidth="1.500" />
        <path d="M720 450L727 465" stroke="#30e030" strokeWidth="1.500" />
        <circle cx="714" cy="473" r="2" fill="#f03020" />
        <circle cx="737" cy="466" r="2" fill="#30e0f0" />
        <circle cx="720" cy="451" r="2" fill="#30e030" />
        <path d="M672 522Q690 516 687 534M660 478L668 500" stroke="#c07020" strokeDasharray="3 2" />

        <rect x="807" y="383" width="8" height="11" fill="#a9b9c4" />
        <rect x="831" y="408" width="8" height="10" fill="#a9b9a4" />
        <text x="808" y="393" fontSize="10" fill="#555">X</text>
        <text x="832" y="417" fontSize="10" fill="#555">Z</text>
        <text x="710" y="206" fill="#7c604c">FRONT</text>
        <text x="934" y="624" fill="#7c604c">RIGHT</text>
        <text x="608" y="524" fill="#8c5c4c">TOP</text>
        <text x="827" y="403" fill="#7c6030">PRT_CSYS_DEF</text>
        <text x="869" y="378" fill="#f01828">A_1</text>
        <text x="618" y="436" fill="#0a0a28">360.00</text>
      </svg>
    </main>
  );
}

function VTool({ name, flyout }: { name: string; flyout?: string }) {
  return (
    <div className="flex h-7 items-center">
      <button aria-label={name} className="flex w-7 shrink-0 justify-center"><Icon name={name} /></button>
      {flyout && (
        <svg viewBox="0 0 4 7" className="ml-1 h-[7px] w-1" aria-hidden="true"><path d="M0 0l4 3.500L0 7z" fill={flyout} /></svg>
      )}
    </div>
  );
}

function HGrip() {
  return (
    <div className="flex h-3.5 items-center px-px">
      <div className="h-[3px] w-full border-y border-dotted border-[#5b7d9c]" />
    </div>
  );
}

function SideTools() {
  return (
    <nav className="flex w-[69px] shrink-0 justify-between bg-[#dbe9f2]">
      <div className="w-10">
        <HGrip />
        {["sketchTool", "plane", "axis", "curve"].map((n) => <VTool key={n} name={n} />)}
        <VTool name="points" flyout="#222" />
        {["csys", "measure", "chain"].map((n) => <VTool key={n} name={n} />)}
        <HGrip />
        {["note", "noteA", "notes"].map((n) => <VTool key={n} name={n} />)}
        <HGrip />
        {["hole", "shell"].map((n) => <VTool key={n} name={n} />)}
        <VTool name="rib" flyout="#a6b0b6" />
        {["draft", "round", "chamfer"].map((n) => <VTool key={n} name={n} />)}
      </div>
      <div className="w-7">
        <HGrip />
        {["extrude", "revolveOff", "sweep", "boundary", "fill"].map((n) => <VTool key={n} name={n} />)}
        <HGrip />
        {["mirror", "merge", "trim", "pattern"].map((n) => <VTool key={n} name={n} />)}
      </div>
    </nav>
  );
}

const tasks = [
  { icon: "ie", label: "hao123_上网..." },
  { icon: "ie", label: "hyfjy - 中..." },
  { icon: "note2", label: "施工" },
  { icon: "ie", label: "求助锥齿轮P..." },
  { icon: "folder", label: "D:\\费照片\\..." },
  { icon: "folder", label: "C:\\Document..." },
  { icon: "part", label: "PRT0001 (活...", active: true },
  { icon: "folder", label: "E:\\0\\0\\0\\0\\..." },
];

function Taskbar() {
  const raised = "border border-t-white border-l-white border-r-[#55524c] border-b-[#55524c]";
  return (
    <footer className="flex h-[30px] shrink-0 items-center border-t border-[#f4f2ee] bg-[#d4d0c8] px-[3px] text-[12px] leading-4 text-black">
      <button className={clsx("flex h-[23px] w-[46px] items-center pl-px", raised)}>
        <Icon name="win" className="size-[18px]" />开始
      </button>
      <div className="ml-2 flex items-center gap-1.5">
        <button aria-label="pictures"><Icon name="brushes" className="size-4" /></button>
        <button aria-label="anchor"><Icon name="anchor" className="size-4" /></button>
        <button aria-label="browser"><Icon name="page" className="size-4" /></button>
      </div>
      <span className="ml-3 w-3.5 font-['Liberation_Mono',monospace] font-bold">»</span>
      <div className="flex min-w-0 flex-1 gap-[3px]">
        {tasks.map((t) => (
          <button
            key={t.label}
            className={clsx(
              "flex h-[23px] min-w-0 flex-1 items-center gap-1 whitespace-nowrap pl-1",
              t.active ? "border border-t-[#55524c] border-l-[#55524c] border-r-white border-b-white bg-[#ebe9e5]" : raised
            )}
          >
            <Icon name={t.icon} className="size-4" />
            <span><Txt>{t.label}</Txt></span>
          </button>
        ))}
      </div>
      <button aria-label="keyboard" className="mr-2 ml-3"><Icon name="keyboard" className="size-4" /></button>
      <div className="flex h-[23px] w-[153px] items-center justify-between border border-t-[#808080] border-l-[#808080] border-r-white border-b-white pl-0.5 pr-1.5">
        <Icon name="netOff" className="size-4" />
        <Icon name="qq" className="size-4" />
        <Icon name="net" className="size-4" />
        <Icon name="volume" className="size-4" />
        <span className="flex flex-col items-center font-bold">
          <span className="bg-[#d82020] text-[7px] leading-[11px] text-white">中文</span>
          <span className="bg-white px-0.5 font-['Liberation_Mono',monospace] text-[9px] leading-[10px] text-[#1414c0]">cn</span>
        </span>
        <Icon name="shield" className="size-3.5" />
        <span className="ml-2"><Txt>20:24</Txt></span>
      </div>
    </footer>
  );
}

export default function App() {
  return (
    <div className="relative flex h-screen flex-col overflow-hidden bg-[#dbe8f1] font-['Noto_Sans_CJK_SC',sans-serif] text-[#222]">
      <TitleBar />
      <nav className="flex h-[26px] shrink-0 items-center gap-3.5 border-b border-[#c4d6e2] bg-gradient-to-b from-[#f1f5f9] to-[#e4edf4] pt-1.5 pl-1.5 text-[12px] leading-4">
        {menus.map(([label, key]) => (
          <button key={key}>
            {label}
            <span className="font-['Liberation_Mono',monospace] text-[10px]">(<u>{key}</u>)</span>
          </button>
        ))}
        <button>应用</button>
      </nav>
      <Toolbar />
      <Dashboard />
      <div className="flex min-h-0 flex-1">
        <ModelTree />
        <Splitter />
        <Viewport />
        <SideTools />
      </div>
      <Taskbar />
      <ImePanel />
    </div>
  );
}
